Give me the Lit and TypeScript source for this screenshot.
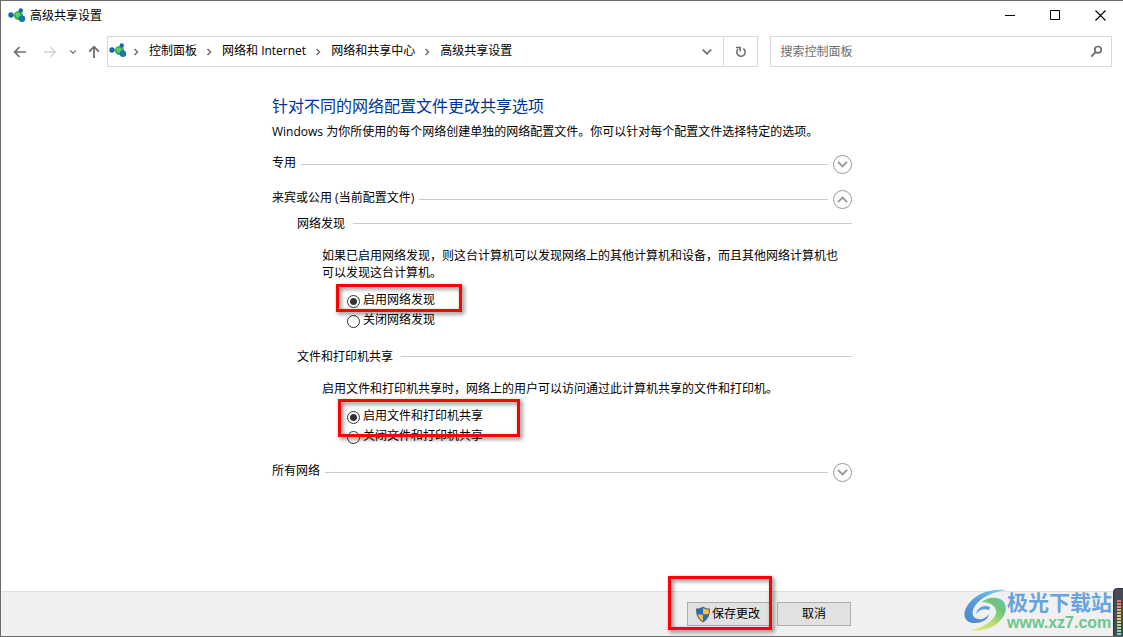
import { LitElement, html, css, svg } from "lit";
import { customElement, property, state } from "lit/decorators.js";

const networkIcon = html`<svg class="net" viewBox="0 0 18 16" width="18" height="16" aria-hidden="true">
  <path d="M4 7.5 10 7.5 12 3M10 8l4 4" stroke="#7fb2c9" stroke-width="1" fill="none" />
  <circle cx="10.5" cy="7.5" r="4.6" fill="#35b34a" />
  <circle cx="9.8" cy="6.8" r="2.4" fill="#5ccb68" />
  <circle cx="3" cy="7" r="2.7" fill="#1766ad" />
  <circle cx="12.8" cy="2.4" r="2.2" fill="#1766ad" />
  <circle cx="14" cy="10.800" r="3.2" fill="#1d6fb8" />
</svg>`;

const chevron = svg`<path d="M1.5 3 5 6.5 8.5 3" fill="none" stroke="currentColor" stroke-width="1.5" />`;

@customElement("section-row")
class SectionRow extends LitElement {
  @property() label = "";
  @property({ type: Boolean }) open = false;

  static styles = css`
    :host { display: flex; align-items: center; gap: 5px; height: 20px; }
    .label { padding-bottom: 2px; }
    .rule { flex: 1; height: 1px; background: #cbcbcb; }
    .toggle {
      width: 19px; height: 19px; padding: 0; border: 1px solid #999; border-radius: 50%;
      background: #fff; color: #999; display: grid; place-items: center;
    }
    .flip { transform: rotate(180deg); }
  `;

  render() {
    return html`
      <span class="label">${this.label}</span>
      <span class="rule"></span>
      <button class="toggle" aria-label=${this.label} aria-expanded=${this.open ? "true" : "false"}>
        <svg class=${this.open ? "flip" : ""} width="13" height="13" viewBox="0 0 10 10">${chevron}</svg>
      </button>
    `;
  }
}

@customElement("option-group")
class OptionGroup extends LitElement {
  @property() name = "";
  @property() heading = "";
  @property() text = "";
  @property({ attribute: false }) options: string[] = [];
  @property() mark = "";
  @state() private selected = 0;

  static styles = css`
    :host { display: block; padding-left: 25px; }
    .head { display: flex; align-items: center; gap: 8px; height: 18px; }
    .title { padding-top: 1px; }
    .rule { flex: 1; height: 1px; background: #cbcbcb; }
    .text { margin: 15px 0 0; padding: 0 8px 0 25px; line-height: 17px; }
    .choices { position: relative; margin-top: 10px; padding-left: 50px; }
    .choice { display: flex; align-items: center; gap: 3px; height: 20px; width: max-content; }
    .name { padding-bottom: 2px; }
    .radio {
      appearance: none; width: 13px; height: 13px; margin: 0; flex: none;
      border: 1px solid #333; border-radius: 50%; background: #fff;
    }
    .radio:checked { background: radial-gradient(circle, #333 3px, #fff 4px); }
    .mark {
      position: absolute; box-sizing: border-box; border: 3px solid #fe0000;
      filter: drop-shadow(2px 2px 2px rgba(0, 0, 0, 0.55)); pointer-events: none;
    }
    .small { left: 39px; top: -7px; width: 126px; height: 28px; }
    .large { left: 41px; top: -8px; width: 182px; height: 38px; }
  `;

  render() {
    return html`
      <div class="head"><span class="title">${this.heading}</span><span class="rule"></span></div>
      <p class="text">${this.text}</p>
      <div class="choices" role="radiogroup" aria-label=${this.heading}>
        ${this.options.map(
          (o, i) => html`<label class="choice">
            <input class="radio" type="radio" name=${this.name} .checked=${i === this.selected}
              @change=${() => (this.selected = i)} />
            <span class="name">${o}</span>
          </label>`
        )}
        <div class="mark ${this.mark}"></div>
      </div>
    `;
  }
}

@customElement("app-root")
class AppRoot extends LitElement {
  private crumbs = ["控制面板", "网络和 Internet", "网络和共享中心", "高级共享设置"];

  static styles = css`
    :host {
      display: flex; flex-direction: column; box-sizing: border-box; min-height: 100vh;
      position: relative; overflow: hidden; background: #fff; color: #000;
      border: solid #6b6b6b; border-width: 1px 0 1px 1px;
      font: 12px/18px "Open Sans", "Noto Sans CJK SC", sans-serif;
    }
    button, input { font: inherit; color: inherit; }
    .net { flex: none; display: block; }
    .title { display: flex; align-items: center; height: 29px; padding-left: 7px; }
    .title .name { flex: 1; margin: 0 0 0 4px; font-size: 12px; font-weight: normal; }
    .win { width: 45px; height: 29px; padding: 0; border: 0; background: none; display: grid; place-items: center; }
    .nav { display: flex; align-items: center; padding: 6px 11px 0 11px; }
    .arrow { padding: 0; border: 0; background: none; color: #6e6e6e; display: grid; place-items: center; height: 30px; width: 16px; }
    .arrow.off { color: #d2d2d2; margin-left: 14px; }
    .arrow.recent { margin-left: 8px; width: 14px; }
    .arrow.up { margin-left: 6px; }
    .address { flex: 652; display: flex; box-sizing: border-box; height: 31px; margin-left: 5px; border: 1px solid #d9d9d9; }
    .crumbs { flex: 1; display: flex; align-items: center; list-style: none; margin: 0; padding: 0 0 2px 1px; }
    .crumb { display: flex; align-items: center; }
    .crumb a { color: #000; text-decoration: none; }
    .sep { width: 6px; margin: 2px 10px 0 9px; color: #707070; display: block; }
    .crumb:first-of-type .sep { margin-left: 6px; }
    .tool { height: 29px; padding: 0; border: 0; background: none; color: #6e6e6e; display: grid; place-items: center; width: 33px; }
    .tool.reload { border-left: 1px solid #d9d9d9; width: 34px; }
    .search { flex: 341; display: flex; align-items: center; box-sizing: border-box; height: 31px; margin-left: 12px; border: 1px solid #d9d9d9; }
    .query { flex: 1; min-width: 0; border: 0; outline: 0; padding: 0 9px; background: none; }
    .query::placeholder { color: #6d6d6d; opacity: 1; }
    .search .tool { width: 29px; }
    .main { flex: 1; box-sizing: border-box; width: 100%; max-width: 580px; margin: 0 auto; padding: 27px 0 24px; }
    .heading { margin: 0; font-size: 16px; line-height: 24px; font-weight: normal; color: #003399; }
    .intro { margin: 5px 0 13px; }
    .guest { margin-top: 15px; }
    .first { margin-top: 5px; }
    .second { margin-top: 16px; }
    .all { margin-top: 15px; }
    .footer { background: #f0f0f0; border-top: 1px solid #dfdfdf; height: 44px; display: flex; justify-content: center; }
    .actions { box-sizing: border-box; width: 100%; max-width: 580px; display: flex; justify-content: flex-end; gap: 7px; padding: 10px 1px 0 0; }
    .holder { position: relative; height: 24px; }
    .btn {
      box-sizing: border-box; width: 74px; height: 24px; padding: 0; border: 1px solid #adadad; background: #e1e1e1;
      display: flex; align-items: center; justify-content: center; gap: 1px;
    }
    .btn.save { width: 83px; padding-right: 2px; }
    .mark {
      position: absolute; left: -19px; top: -26px; width: 104px; height: 54px; box-sizing: border-box;
      border: 3px solid #fe0000; filter: drop-shadow(2px 2px 2px rgba(0, 0, 0, 0.55)); pointer-events: none;
    }
    .brand { position: absolute; right: 11px; bottom: 4px; display: flex; align-items: center; }
    .words { display: flex; flex-direction: column; }
    .cn { font: bold 21px/26px "Noto Sans CJK SC", sans-serif; color: #69a3dc; }
    .site { font: bold 16px/18px "Liberation Sans", sans-serif; color: #6cc78a; }
    .gadget {
      position: absolute; right: -3px; bottom: -1px; width: 13px; height: 49px; box-sizing: border-box;
      background: #454b57; border: 1px solid #2f343e; border-radius: 4px 0 0 0; padding: 10px 0 0 3px;
    }
    .bars {
      width: 4px; height: 38px;
      background: repeating-linear-gradient(#454b57 0 1px, transparent 1px 3px), linear-gradient(#f06a6a, #e8d75c 50%, #62dcc0);
    }
  `;

  render() {
    return html`
      <header class="title">
        ${networkIcon}
        <h1 class="name">高级共享设置</h1>
        <button class="win" aria-label="最小化"><svg width="11" height="11"><path d="M0 5.5h10" stroke="#000" /></svg></button>
        <button class="win" aria-label="最大化"><svg width="11" height="11"><path d="M.5 .5h9v9h-9z" stroke="#000" fill="none" /></svg></button>
        <button class="win" aria-label="关闭"><svg width="11" height="11"><path d="M.5 .5l10 10M10.5 .5l-10 10" stroke="#000" stroke-width="1.1" /></svg></button>
      </header>
      <nav class="nav">
        <button class="arrow" aria-label="后退"><svg width="14" height="12" viewBox="0 0 14 12"><path d="M13 6H2M6.5 1.2 1.7 6l4.8 4.8" fill="none" stroke="currentColor" stroke-width="1.7" /></svg></button>
        <button class="arrow off" aria-label="前进" disabled><svg width="14" height="12" viewBox="0 0 14 12"><path d="M1 6h11M7.5 1.2 12.3 6l-4.8 4.8" fill="none" stroke="currentColor" stroke-width="1.5" /></svg></button>
        <button class="arrow recent" aria-label="最近位置"><svg width="8" height="8" viewBox="0 0 10 10">${chevron}</svg></button>
        <button class="arrow up" aria-label="上移"><svg width="12" height="13" viewBox="0 0 12 13"><path d="M6 13V2M1.2 6.5 6 1.7l4.8 4.8" fill="none" stroke="currentColor" stroke-width="1.8" /></svg></button>
        <div class="address">
          <ol class="crumbs">
            ${networkIcon}
            ${this.crumbs.map(
              (c) => html`<li class="crumb">
                <svg class="sep" width="6" height="8" viewBox="0 0 6 8"><path d="M1.5 1 4.5 4l-3 3" fill="none" stroke="currentColor" stroke-width="1.5" /></svg>
                <a href="#">${c}</a>
              </li>`
            )}
          </ol>
          <button class="tool" aria-label="展开"><svg width="12" height="12" viewBox="0 0 10 10">${chevron}</svg></button>
          <button class="tool reload" aria-label="刷新"><svg width="12" height="12" viewBox="0 0 12 12"><path d="M8.3 2.6A4.2 4.2 0 1 1 3.2 3" fill="none" stroke="currentColor" stroke-width="1.6" /><path d="M1 1.5h4.2v4" fill="none" stroke="currentColor" stroke-width="1.5" /></svg></button>
        </div>
        <div class="search">
          <input class="query" type="text" placeholder="搜索控制面板" aria-label="搜索控制面板" />
          <button class="tool" aria-label="搜索"><svg width="13" height="13" viewBox="0 0 13 13"><circle cx="8" cy="4.7" r="3.2" fill="none" stroke="currentColor" stroke-width="1.7" /><path d="M5.6 7.2 1.2 11.6" stroke="currentColor" stroke-width="1.9" /></svg></button>
        </div>
      </nav>
      <main class="main">
        <h2 class="heading">针对不同的网络配置文件更改共享选项</h2>
        <p class="intro">Windows 为你所使用的每个网络创建单独的网络配置文件。你可以针对每个配置文件选择特定的选项。</p>
        <section-row label="专用"></section-row>
        <section-row class="guest" label="来宾或公用 (当前配置文件)" open></section-row>
        <option-group class="first" name="discovery" heading="网络发现" mark="small"
          text="如果已启用网络发现，则这台计算机可以发现网络上的其他计算机和设备，而且其他网络计算机也可以发现这台计算机。"
          .options=${["启用网络发现", "关闭网络发现"]}></option-group>
        <option-group class="second" name="sharing" heading="文件和打印机共享" mark="large"
          text="启用文件和打印机共享时，网络上的用户可以访问通过此计算机共享的文件和打印机。"
          .options=${["启用文件和打印机共享", "关闭文件和打印机共享"]}></option-group>
        <section-row class="all" label="所有网络"></section-row>
      </main>
      <footer class="footer">
        <div class="actions">
          <div class="holder">
            <button class="btn save">
              <svg width="16" height="17" viewBox="0 0 16 17" aria-hidden="true">
                <path d="M8 .5C6 2 3.500 2.600 1 2.600 .8 8.500 2.500 13.500 8 16.500c5.500-3 7.200-8 7-13.900C12.500 2.600 10 2 8 .5z" fill="#5d6670" />
                <path d="M7.900 2C6.300 3 4.300 3.600 2.200 3.700c0 1.800.1 3.200.5 4.700h5.200z" fill="#1a6fd0" />
                <path d="M8.100 2c1.600 1 3.600 1.600 5.700 1.700 0 1.800-.1 3.200-.5 4.700H8.100z" fill="#fcc436" />
                <path d="M7.900 8.600H2.800c.8 2.700 2.400 5 5.100 6.600z" fill="#fcc436" />
                <path d="M8.100 8.600h5.100c-.8 2.700-2.400 5-5.100 6.600z" fill="#1a6fd0" />
              </svg>
              <span>保存更改</span>
            </button>
            <div class="mark"></div>
          </div>
          <button class="btn">取消</button>
        </div>
      </footer>
      <div class="brand">
        <svg width="43" height="42" viewBox="8 6 43 42" aria-hidden="true">
          <defs>
            <linearGradient id="a" x1="0" y1="1" x2="1" y2="0"><stop offset="0" stop-color="#4a86cc" /><stop offset=".5" stop-color="#5a9fdc" /><stop offset="1" stop-color="#7ad3f2" /></linearGradient>
            <linearGradient id="b" x1="0" y1="1" x2="1" y2="0"><stop offset="0" stop-color="#f0ea70" /><stop offset=".45" stop-color="#b5dc74" /><stop offset=".75" stop-color="#6cc47c" /><stop offset="1" stop-color="#62c6b0" /></linearGradient>
          </defs>
          <path d="M50 7C34 5 17 11 10 25c-4 9 0 15 9 15 7 0 13-3 14-9-3 4-7 6-11 5-6-1-7-7-3-13C25 14 37 9 50 7z" fill="url(#a)" />
          <path d="M20 31c1-6 8-10 14-7l-1 3c-5-2-10 0-13 4z" fill="#5a9fdc" />
          <path d="M25 19c7-5 17-6 22-1 8 9-2 24-17 28-6 2-11 2-16 1 13-2 24-9 26-17 1-7-6-11-15-11z" fill="url(#b)" />
        </svg>
        <div class="words"><span class="cn">极光下载站</span><span class="site">www.xz7.com</span></div>
      </div>
      <div class="gadget"><div class="bars"></div></div>
    `;
  }
}
